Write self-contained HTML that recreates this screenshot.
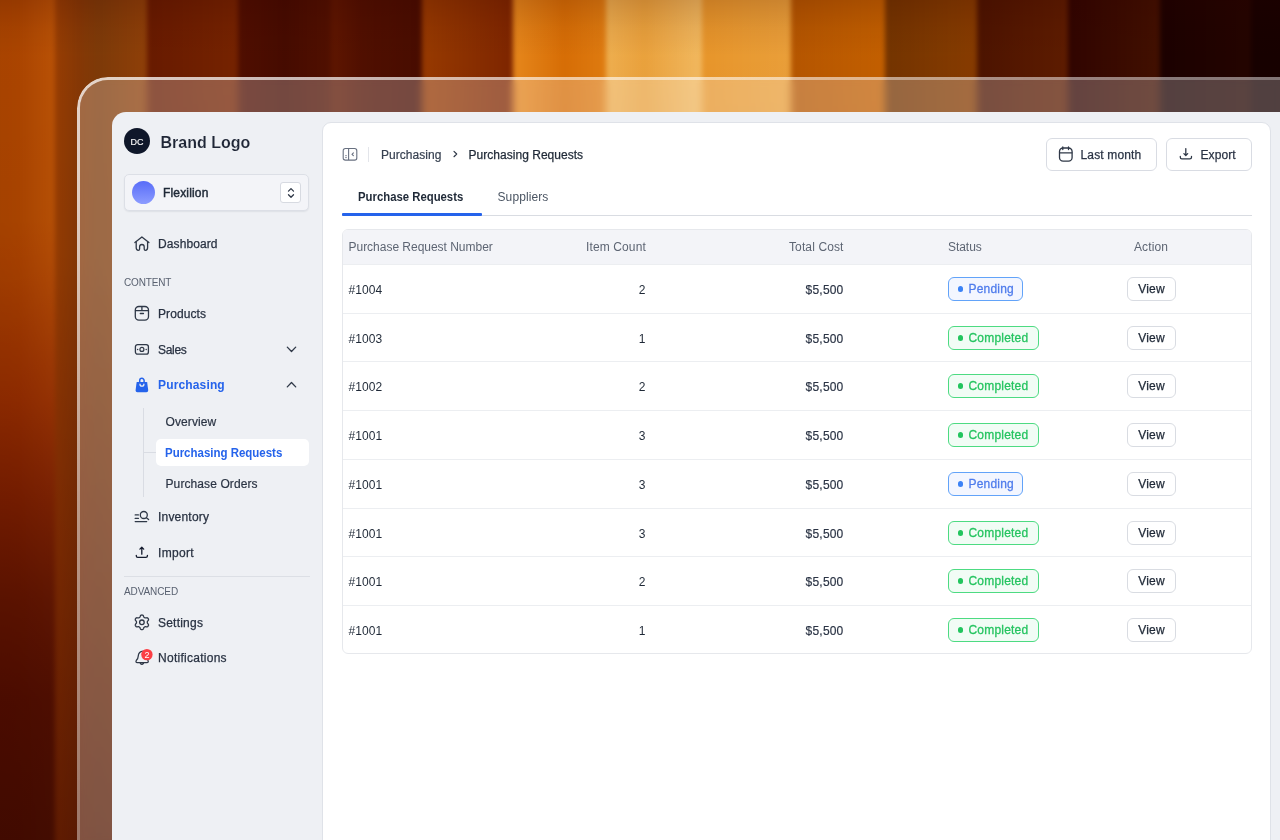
<!DOCTYPE html>
<html lang="en">
<head>
<meta charset="utf-8">
<title>Purchasing Requests</title>
<style>
*{box-sizing:border-box;margin:0;padding:0}
html,body{width:1280px;height:840px;overflow:hidden;background:#3a0a00}
body{position:relative;font-family:"Liberation Sans",sans-serif;color:#1f2937;-webkit-font-smoothing:antialiased}
.abs{position:absolute}
#side,#main{position:absolute;left:0;top:0;width:1280px;height:840px;will-change:transform}
/* ---------- background stripes ---------- */
#bg{position:absolute;left:0;top:0;width:1280px;height:840px;overflow:hidden}
#bgi{position:absolute;left:0;top:-20px;width:1280px;height:880px;filter:blur(2.6px)}
#bg i{position:absolute;top:0;height:880px;display:block}
#bg .shade{position:absolute;left:0;top:0;width:1280px;height:840px;background:linear-gradient(to bottom,rgba(45,0,0,.17) 0,rgba(45,0,0,.06) 28px,rgba(45,0,0,0) 56px),linear-gradient(to bottom,rgba(30,0,0,0) 0%,rgba(30,0,0,.04) 30%,rgba(30,0,0,.36) 100%)}
/* ---------- device frame ---------- */
#frame{position:absolute;left:80px;top:80px;width:1300px;height:900px;border-radius:28px;background:rgba(255,255,255,.25);backdrop-filter:blur(3px)}
.ring{position:absolute;left:77px;top:77px;width:1306px;height:906px;border-radius:31px;padding:3px;-webkit-mask:linear-gradient(#fff 0 0) content-box,linear-gradient(#fff 0 0);-webkit-mask-composite:xor;mask-composite:exclude}
#ringL{background:linear-gradient(to bottom,rgba(255,255,255,.78) 0,rgba(255,255,255,.76) 13%,rgba(255,255,255,.52) 49%,rgba(255,255,255,.42) 81%,rgba(255,255,255,.4) 100%);clip-path:polygon(0 0,31px 0,31px 100%,0 100%)}
#ringT{background:linear-gradient(to right,rgba(255,255,255,.78) 0,rgba(255,255,255,.64) 36%,rgba(255,255,255,.48) 82%,rgba(255,255,255,.45) 100%);clip-path:polygon(31px 0,100% 0,100% 100%,31px 100%)}
#screen{position:absolute;left:112px;top:112px;width:1300px;height:800px;border-radius:14px;background:#eef0f4;overflow:hidden}
#panel{position:absolute;left:322px;top:122px;width:949px;height:760px;background:#fff;border:1px solid #dfe2e8;border-radius:9px}
/* ---------- sidebar ---------- */
.nav{position:absolute;left:158px;font-size:12px;line-height:16px;color:#283141;white-space:nowrap;letter-spacing:.1px;-webkit-text-stroke:.25px #283141}
.sub{position:absolute;left:165.5px;font-size:12px;line-height:16px;color:#2b3444;white-space:nowrap;letter-spacing:.1px;-webkit-text-stroke:.2px #2b3444}
.lbl{position:absolute;left:124px;font-size:10px;line-height:12px;color:#596170;letter-spacing:-.15px;white-space:nowrap}
svg{position:absolute;overflow:visible}
.ic{fill:none;stroke:#2f3847;stroke-width:1.3;stroke-linecap:round;stroke-linejoin:round}
/* ---------- main ---------- */
.t{position:absolute;white-space:nowrap;font-size:12px;line-height:16px}
.btn{position:absolute;top:138px;height:32.5px;border:1px solid #d9dce3;border-radius:6px;background:#fff}
.th{position:absolute;top:238.5px;font-size:12px;line-height:16px;color:#5d6573;white-space:nowrap;letter-spacing:.12px}
.row{position:absolute;left:343px;width:908px;height:49px;border-top:1px solid #eceef1}
.row .c1{position:absolute;left:5.5px;top:16.5px;font-size:12px;line-height:16px;color:#1f2937;letter-spacing:.1px}
.row .c2{position:absolute;right:605.5px;top:16.5px;font-size:12px;line-height:16px;color:#1f2937}
.row .c3{position:absolute;right:407.5px;top:16.5px;font-size:12px;line-height:16px;color:#2b3445;-webkit-text-stroke:.18px #2b3445;letter-spacing:.2px}
.badge{position:absolute;left:605px;top:12px;height:24px;border-radius:6px;border:1px solid;font-size:12px;line-height:22.6px;padding-left:19.5px;letter-spacing:.2px;-webkit-text-stroke:.28px}
.badge:before{content:"";position:absolute;left:8.6px;top:8.2px;width:5.6px;height:5.6px;border-radius:50%;background:var(--d)}
.pend{width:75px;color:#4f7cec;border-color:#62a3f9;background:#f3f6ff;--d:#3b82f6}
.comp{width:90.5px;color:#25c460;border-color:#4ddb82;background:#f1fcf5;--d:#22c55e}
.view{position:absolute;left:784px;top:12px;width:49px;height:24px;border:1px solid #d9dce2;border-radius:6px;background:#fff;font-size:12px;line-height:22px;text-align:center;color:#1f2937;-webkit-text-stroke:.25px #1f2937;letter-spacing:.2px}
</style>
</head>
<body>
<div id="bg"><div id="bgi">
<i style="left:-10px;width:65px;background:linear-gradient(to bottom,rgba(120,0,0,0) 27%,rgba(120,0,0,.08) 34%,rgba(117,0,0,.31) 47.7%,rgba(95,0,0,.51) 59%,rgba(75,0,0,.66) 70.5%,rgba(68,0,0,.76) 81.8%,rgba(59,0,0,.77) 97.7%),linear-gradient(to right,#a84300,#ac4500 45%,#ba5206)"></i>
<i style="left:55px;width:92px;background:linear-gradient(to bottom,rgba(110,8,0,0) 32%,rgba(110,8,0,.16) 62%,rgba(90,0,0,.3) 100%),linear-gradient(to right,#983d02,#863805 26%,#7e3a08 48%,#904008)"></i>
<i style="left:147px;width:91px;background:linear-gradient(to right,#681a00,#762300)"></i>
<i style="left:238px;width:93px;background:linear-gradient(to right,#500e00,#460b00 50%,#511000)"></i>
<i style="left:331px;width:91px;background:linear-gradient(to right,#5f1600,#500f00 35%,#480c00)"></i>
<i style="left:422px;width:91px;background:linear-gradient(to right,#983a00,#7e2500)"></i>
<i style="left:513px;width:93px;background:linear-gradient(to right,#e8881c,#d86e05 55%,#e07c10)"></i>
<i style="left:606px;width:96px;background:linear-gradient(to right,#f0b050,#eba23c 40%,#f3ba60)"></i>
<i style="left:702px;width:89px;background:linear-gradient(to right,#e9962a,#eba03a)"></i>
<i style="left:791px;width:94px;background:linear-gradient(to right,#b65600,#c46000)"></i>
<i style="left:885px;width:92px;background:linear-gradient(to right,#743400,#883c00)"></i>
<i style="left:977px;width:91px;background:linear-gradient(to right,#4c1300,#5e1c00)"></i>
<i style="left:1068px;width:92px;background:linear-gradient(to right,#300400,#421000)"></i>
<i style="left:1160px;width:91px;background:linear-gradient(to right,#1b0100,#240400)"></i>
<i style="left:1251px;width:40px;background:#170100"></i>
</div><div class="shade"></div>
</div>
<div id="frame"></div><div id="ringL" class="ring"></div><div id="ringT" class="ring"></div>
<div id="screen"></div>
<div id="panel"></div>

<!-- SIDEBAR -->
<div id="side">
<div class="abs" style="left:124px;top:128px;width:26px;height:26px;border-radius:50%;background:#0f172a;color:#fff;font-size:9px;line-height:26px;text-align:center;letter-spacing:.1px;-webkit-text-stroke:.12px #fff;padding-top:.5px">DC</div>
<div class="abs" style="left:160.5px;top:132.5px;font-size:16px;line-height:20px;font-weight:bold;color:#1f2636;-webkit-text-stroke:.12px #eef0f4;white-space:nowrap">Brand Logo</div>

<div class="abs" style="left:124px;top:174px;width:185px;height:37px;border:1px solid #dcdfe6;border-radius:5px;background:#f3f4f8;box-shadow:0 1px 1.5px rgba(16,24,40,.07)"></div>
<div class="abs" style="left:132px;top:181px;width:23px;height:23px;border-radius:50%;background:linear-gradient(to bottom,#586cf8,#8c9cff)"></div>
<div class="abs" style="left:163px;top:184.5px;font-size:12px;line-height:16px;color:#1f2937;-webkit-text-stroke:.45px #1f2937;letter-spacing:.17px">Flexilion</div>
<div class="abs" style="left:280px;top:182px;width:21px;height:21px;border:1px solid #d7dae1;border-radius:3px;background:#fff"></div>
<svg style="left:280.5px;top:182.5px" width="20" height="20" viewBox="0 0 20 20"><path class="ic" d="M7.5 8.1 L10 5.6 L12.5 8.1 M7.5 11.8 L10 14.3 L12.5 11.8"/></svg>

<!-- Dashboard -->
<svg style="left:134px;top:235px" width="16" height="16" viewBox="0 0 16 16"><path class="ic" d="M0.9 7.5 L7.9 1.9 L14.9 7.5"/><path class="ic" d="M2.2 6.9 V12.6 Q2.2 15.3 4.3 15.3 Q5.6 15.3 5.6 13.9 V11.8 a2.3 2.3 0 0 1 4.6 0 V13.9 Q10.2 15.3 11.5 15.3 Q13.6 15.3 13.6 12.6 V6.9"/></svg>
<div class="nav" style="top:236px">Dashboard</div>

<div class="lbl" style="top:277px">CONTENT</div>

<!-- Products -->
<svg style="left:134px;top:305px" width="16" height="16" viewBox="0 0 16 16"><rect class="ic" x="1.3" y="1.5" width="13.2" height="13.6" rx="3.6"/><path class="ic" d="M1.5 5.6 H14.3 M7.9 1.6 V5.6 M6.3 8.5 H9.5"/></svg>
<div class="nav" style="top:306px">Products</div>

<!-- Sales -->
<svg style="left:134px;top:341px" width="16" height="16" viewBox="0 0 16 16"><rect class="ic" x="1.4" y="3.6" width="13" height="9.6" rx="2.2"/><circle class="ic" cx="7.9" cy="8.4" r="2" style="stroke-width:1.2"/><circle cx="3.6" cy="8.4" r=".75" fill="#2f3847"/><circle cx="12.2" cy="8.4" r=".75" fill="#2f3847"/></svg>
<div class="nav" style="top:342px;letter-spacing:-.3px">Sales</div>
<svg style="left:284px;top:342px" width="15" height="15" viewBox="0 0 15 15"><path class="ic" d="M3.3 5.1 L7.5 9.5 L11.7 5.1" style="stroke-width:1.3"/></svg>

<!-- Purchasing -->
<svg style="left:134px;top:376px" width="16" height="18" viewBox="0 0 16 18"><path d="M5.7 6.2 V4.5 a2.2 2.2 0 0 1 4.4 0 V6.2" fill="none" stroke="#2563eb" stroke-width="1.5"/><path d="M3.2 5.9 H12.6 Q13.1 5.9 13.2 6.5 L14.2 14.2 Q14.4 16.2 12.4 16.2 H3.4 Q1.4 16.2 1.6 14.2 L2.6 6.5 Q2.7 5.9 3.2 5.9 Z" fill="#2563eb"/><path d="M6 8.2 a1.95 1.95 0 0 0 3.9 0" fill="none" stroke="#eef0f4" stroke-width="1.25" stroke-linecap="round"/></svg>
<div class="nav" style="top:377.4px;color:#2563eb;font-weight:bold;-webkit-text-stroke:0;letter-spacing:.15px">Purchasing</div>
<svg style="left:284px;top:377px" width="15" height="15" viewBox="0 0 15 15"><path class="ic" d="M3.3 9.9 L7.5 5.5 L11.7 9.9" style="stroke-width:1.3"/></svg>

<!-- sub tree -->
<div class="abs" style="left:143px;top:408px;width:1px;height:89px;background:#d9dce3"></div>
<div class="abs" style="left:143px;top:451.5px;width:13px;height:1px;background:#d9dce3"></div>
<div class="sub" style="top:414px">Overview</div>
<div class="abs" style="left:155.5px;top:438.5px;width:153.5px;height:27.5px;border-radius:5px;background:#fff"></div>
<div class="sub" style="top:444.6px;left:164.8px;color:#2563eb;font-weight:bold;-webkit-text-stroke:0;letter-spacing:0;transform:scaleX(.956);transform-origin:0 0">Purchasing Requests</div>
<div class="sub" style="top:476px">Purchase Orders</div>

<!-- Inventory -->
<svg style="left:134px;top:508px" width="16" height="16" viewBox="0 0 16 16"><path class="ic" d="M1.2 6.9 H4.4 M1.2 10.4 H4.4 M1.2 13.6 H12.7"/><circle class="ic" cx="9.8" cy="7" r="3.5"/><path class="ic" d="M12.4 9.7 L14.6 11.6"/></svg>
<div class="nav" style="top:509px;letter-spacing:.2px">Inventory</div>

<!-- Import -->
<svg style="left:134px;top:544px" width="16" height="16" viewBox="0 0 16 16"><path class="ic" style="stroke:#151c2e" d="M7.8 10.2 V3.4 M5.9 5.1 L7.8 3.2 L9.7 5.1 M2.3 11.3 V12 Q2.3 13.4 3.8 13.4 H11.9 Q13.4 13.4 13.4 12 V11.3"/></svg>
<div class="nav" style="top:544.5px;letter-spacing:.3px">Import</div>

<div class="abs" style="left:124px;top:576px;width:185.5px;height:1px;background:#dcdfe5"></div>
<div class="lbl" style="top:585.6px;letter-spacing:-.1px">ADVANCED</div>

<!-- Settings -->
<svg style="left:134px;top:614px" width="16" height="17" viewBox="0 0 16 17"><path class="ic" d="M13.30 8.30 L13.31 7.95 L13.37 7.58 L13.58 7.17 L14.03 6.66 L14.45 6.08 L14.54 5.55 L14.43 5.08 L14.22 4.65 L13.95 4.26 L13.60 3.93 L13.10 3.74 L12.39 3.81 L11.72 3.95 L11.26 3.93 L10.91 3.79 L10.60 3.62 L10.30 3.44 L10.01 3.21 L9.76 2.82 L9.54 2.17 L9.25 1.52 L8.84 1.18 L8.38 1.04 L7.90 1.00 L7.42 1.04 L6.96 1.18 L6.55 1.52 L6.26 2.17 L6.04 2.82 L5.79 3.21 L5.50 3.44 L5.20 3.62 L4.89 3.79 L4.54 3.93 L4.08 3.95 L3.41 3.81 L2.70 3.74 L2.20 3.93 L1.85 4.26 L1.58 4.65 L1.37 5.08 L1.26 5.55 L1.35 6.08 L1.77 6.66 L2.22 7.17 L2.43 7.58 L2.49 7.95 L2.50 8.30 L2.49 8.65 L2.43 9.02 L2.22 9.43 L1.77 9.94 L1.35 10.52 L1.26 11.05 L1.37 11.52 L1.58 11.95 L1.85 12.34 L2.20 12.67 L2.70 12.86 L3.41 12.79 L4.08 12.65 L4.54 12.67 L4.89 12.81 L5.20 12.98 L5.50 13.16 L5.79 13.39 L6.04 13.78 L6.26 14.43 L6.55 15.08 L6.96 15.42 L7.42 15.56 L7.90 15.60 L8.38 15.56 L8.84 15.42 L9.25 15.08 L9.54 14.43 L9.76 13.78 L10.01 13.39 L10.30 13.16 L10.60 12.98 L10.91 12.81 L11.26 12.67 L11.72 12.65 L12.39 12.79 L13.10 12.86 L13.60 12.67 L13.95 12.34 L14.22 11.95 L14.43 11.52 L14.54 11.05 L14.45 10.52 L14.03 9.94 L13.58 9.43 L13.37 9.02 L13.31 8.65 Z"/><circle class="ic" cx="7.9" cy="8.3" r="2.3"/></svg>
<div class="nav" style="top:614.5px;letter-spacing:.22px">Settings</div>

<!-- Notifications -->
<svg style="left:134px;top:649px" width="18" height="18" viewBox="0 0 18 18"><path class="ic" d="M9.2 2.2 Q4.6 2.4 4.2 7.2 Q4.1 9.6 2.4 11.3 Q1.2 13.4 3.4 13.6 H12.8 Q15 13.4 13.9 11.4 M6.3 14.4 Q7.9 16.4 9.5 14.4"/><circle cx="12.9" cy="5.6" r="5.7" fill="#fb3f45"/><text x="12.9" y="8.8" text-anchor="middle" font-family="Liberation Sans, sans-serif" font-size="9" fill="#fff">2</text></svg>
<div class="nav" style="top:650px;letter-spacing:.27px">Notifications</div>
</div>

<div id="main">
<!-- header -->
<svg style="left:342px;top:147px" width="16" height="14" viewBox="0 0 16 14"><rect x="1.2" y="1.5" width="13.6" height="11.6" rx="2.2" fill="none" stroke="#687080" stroke-width="1.1"/><path d="M6.6 1.5 V13.1" stroke="#687080" stroke-width="1.1" fill="none"/><path d="M11.4 5.9 L10 7.3 L11.4 8.7" stroke="#687080" stroke-width="1.1" fill="none" stroke-linecap="round" stroke-linejoin="round"/><path d="M3.3 8.7 H4.7 M3.3 10.6 H4.7" stroke="#687080" stroke-width="1" fill="none"/></svg>
<div class="abs" style="left:368px;top:146.5px;width:1px;height:15.5px;background:#e3e5ea"></div>
<div class="t" style="left:381px;top:146.5px;color:#374151;-webkit-text-stroke:.2px #374151;letter-spacing:.05px">Purchasing</div>
<svg style="left:449px;top:148px" width="12" height="12" viewBox="0 0 12 12"><path class="ic" d="M5 3.4 L7.7 6.05 L5 8.7" style="stroke-width:1.2"/></svg>
<div class="t" style="left:468.5px;top:146.5px;color:#1f2937;-webkit-text-stroke:.25px #1f2937;letter-spacing:.03px">Purchasing Requests</div>

<div class="btn" style="left:1046px;width:110.5px"></div>
<svg style="left:1058px;top:146px" width="16" height="17" viewBox="0 0 16 17"><rect class="ic" x="1.5" y="2" width="12.6" height="13.2" rx="3.6"/><path class="ic" d="M1.7 6.8 H13.9 M4.8 0.9 V3.6 M10.5 0.9 V3.6"/></svg>
<div class="t" style="left:1080.5px;top:146.5px;color:#2b3445;-webkit-text-stroke:.25px #2b3445;letter-spacing:.15px">Last month</div>
<div class="btn" style="left:1166px;width:85.5px"></div>
<svg style="left:1178px;top:146px" width="16" height="16" viewBox="0 0 16 16"><path class="ic" d="M7.8 2.6 V9.4 M5.9 7.6 L7.8 9.5 L9.7 7.6 M2.3 10.4 V11.2 Q2.3 12.9 3.9 12.9 H11.8 Q13.5 12.9 13.5 11.2 V10.4"/></svg>
<div class="t" style="left:1200.5px;top:146.5px;color:#2b3445;-webkit-text-stroke:.25px #2b3445;letter-spacing:.08px">Export</div>

<!-- tabs -->
<div class="t" style="left:358px;top:188.5px;color:#1f2937;font-weight:bold;letter-spacing:0;transform:scaleX(.945);transform-origin:0 0">Purchase Requests</div>
<div class="t" style="left:497.5px;top:188.5px;color:#4b5563;letter-spacing:.1px">Suppliers</div>
<div class="abs" style="left:342px;top:215px;width:909.5px;height:1px;background:#d9dce2"></div>
<div class="abs" style="left:342px;top:213px;width:139.5px;height:2.7px;background:#2563eb;border-radius:1px"></div>

<!-- table -->
<div class="abs" style="left:342px;top:229px;width:909.5px;height:425px;border:1px solid #e6e8ec;border-radius:6px;background:#fff;overflow:hidden"><div style="height:35px;background:#f3f4f8"></div></div>
<div class="th" style="left:348.5px;letter-spacing:-.02px">Purchase Request Number</div>
<div class="th" style="left:586px">Item Count</div>
<div class="th" style="left:789px">Total Cost</div>
<div class="th" style="left:948px;letter-spacing:-.05px">Status</div>
<div class="th" style="left:1134px">Action</div>

<div class="row" style="top:264px;height:49px"><span class="c1">#1004</span><span class="c2">2</span><span class="c3">$5,500</span><span class="badge pend">Pending</span><span class="view">View</span></div>
<div class="row" style="top:313px;height:48px"><span class="c1">#1003</span><span class="c2">1</span><span class="c3">$5,500</span><span class="badge comp">Completed</span><span class="view">View</span></div>
<div class="row" style="top:361px;height:49px"><span class="c1">#1002</span><span class="c2">2</span><span class="c3">$5,500</span><span class="badge comp">Completed</span><span class="view">View</span></div>
<div class="row" style="top:410px;height:49px"><span class="c1">#1001</span><span class="c2">3</span><span class="c3">$5,500</span><span class="badge comp">Completed</span><span class="view">View</span></div>
<div class="row" style="top:459px;height:49px"><span class="c1">#1001</span><span class="c2">3</span><span class="c3">$5,500</span><span class="badge pend">Pending</span><span class="view">View</span></div>
<div class="row" style="top:508px;height:48px"><span class="c1">#1001</span><span class="c2">3</span><span class="c3">$5,500</span><span class="badge comp">Completed</span><span class="view">View</span></div>
<div class="row" style="top:556px;height:49px"><span class="c1">#1001</span><span class="c2">2</span><span class="c3">$5,500</span><span class="badge comp">Completed</span><span class="view">View</span></div>
<div class="row" style="top:605px;height:49px"><span class="c1">#1001</span><span class="c2">1</span><span class="c3">$5,500</span><span class="badge comp">Completed</span><span class="view">View</span></div>
</div>
</body>
</html>
